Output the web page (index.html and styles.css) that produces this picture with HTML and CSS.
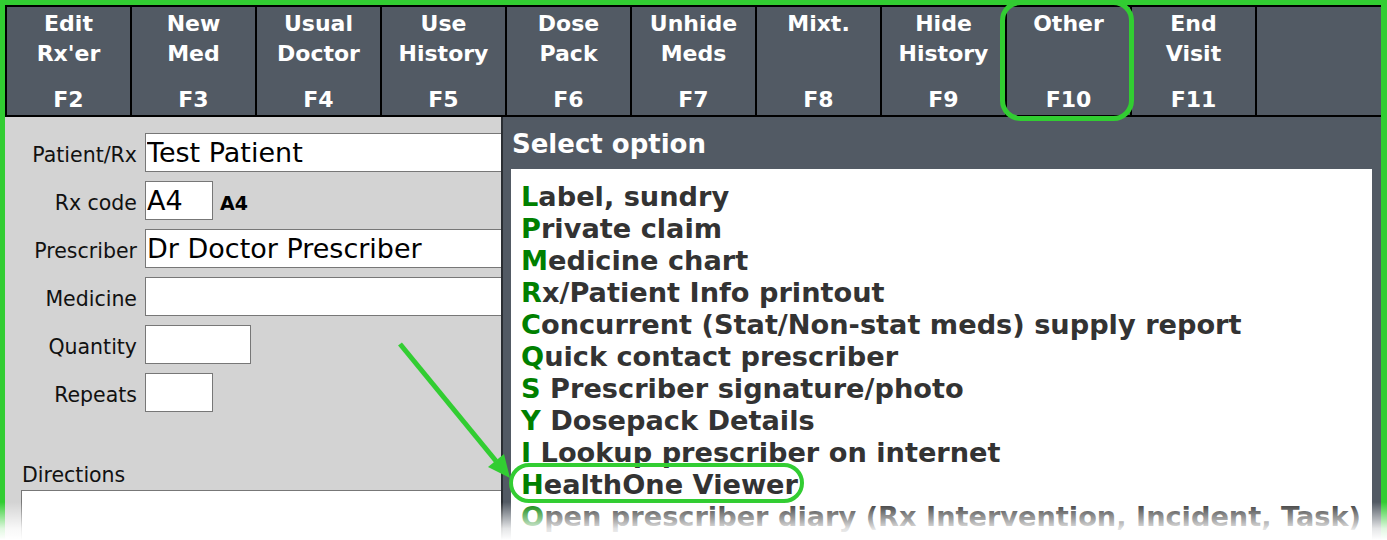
FILE: index.html
```html
<!DOCTYPE html>
<html lang="en">
<head>
    <meta charset="UTF-8">
    <title>Dispense - Other options</title>
    <link rel="stylesheet" href="styles.css">
</head>
<body>

    <div class="frame">
        <div class="toolbar">
            <div class="fkey"><span>Edit<br>Rx'er</span><span>F2</span></div>
            <div class="fkey"><span>New<br>Med</span><span>F3</span></div>
            <div class="fkey"><span>Usual<br>Doctor</span><span>F4</span></div>
            <div class="fkey"><span>Use<br>History</span><span>F5</span></div>
            <div class="fkey"><span>Dose<br>Pack</span><span>F6</span></div>
            <div class="fkey"><span>Unhide<br>Meds</span><span>F7</span></div>
            <div class="fkey"><span>Mixt.</span><span>F8</span></div>
            <div class="fkey"><span>Hide<br>History</span><span>F9</span></div>
            <div class="fkey"><span>Other</span><span>F10</span></div>
            <div class="fkey"><span>End<br>Visit</span><span>F11</span></div>
            <div class="fkey fkey-empty"></div>
        </div>

        <div class="main">
            <div class="form-panel">
                <div class="form-grid">
                    <label>Patient/Rx</label>
                    <input class="wide" value="Test Patient">

                    <label>Rx code</label>
                    <div class="rx-code">
                        <input class="short" value="A4">
                        <b>A4</b>
                    </div>

                    <label>Prescriber</label>
                    <input class="wide" value="Dr Doctor Prescriber">

                    <label>Medicine</label>
                    <input class="wide" value="">

                    <label>Quantity</label>
                    <input class="medium" value="">

                    <label>Repeats</label>
                    <input class="short" value="">
                </div>

                <div class="directions">
                    <label>Directions</label>
                    <textarea></textarea>
                </div>
            </div>

            <div class="options-panel">
                <div class="options-title">Select option</div>
                <ul class="options-list">
                    <li><span class="key">L</span>abel, sundry</li>
                    <li><span class="key">P</span>rivate claim</li>
                    <li><span class="key">M</span>edicine chart</li>
                    <li><span class="key">R</span>x/Patient Info printout</li>
                    <li><span class="key">C</span>oncurrent (Stat/Non-stat meds) supply report</li>
                    <li><span class="key">Q</span>uick contact prescriber</li>
                    <li><span class="key">S</span> Prescriber signature/photo</li>
                    <li><span class="key">Y</span> Dosepack Details</li>
                    <li><span class="key">I</span> Lookup prescriber on internet</li>
                    <li><span class="key">H</span>ealthOne Viewer</li>
                    <li><span class="key">O</span>pen prescriber diary (Rx Intervention, Incident, Task)</li>
                </ul>
            </div>
        </div>
    </div>

    <!-- green callouts drawn over the screen -->
    <svg class="annotations" width="1387" height="540" viewBox="0 0 1387 540">
        <rect x="1002.5" y="2.5" width="129" height="116" rx="18" fill="none" stroke="#32cd32" stroke-width="5"/>
        <rect x="511" y="465" width="291" height="36" rx="18" fill="none" stroke="#32cd32" stroke-width="4"/>
        <line x1="400" y1="344" x2="496" y2="461" stroke="#32cd32" stroke-width="5"/>
        <polygon points="510,478 488,467 504,454" fill="#32cd32"/>
    </svg>

    <div class="bottom-fade"></div>

</body>
</html>
```

FILE: styles.css
```css
body {
    margin: 0;
    font-family: "DejaVu Sans", Verdana, sans-serif;
    background: white;
    width: 1387px;
    height: 540px;
    overflow: hidden;
    position: relative;
}

.frame {
    box-sizing: border-box;
    width: 1387px;
    height: 540px;
    border: 5px solid #32cd32;
    border-right-width: 6px;
    border-bottom: none;
    display: flex;
    flex-direction: column;
    overflow: hidden;
}

/* function key bar */
.toolbar {
    display: flex;
    height: 112px;
    box-sizing: border-box;
    background: #525a64;
    border-top: 2px solid #000;
    border-bottom: 2px solid #000;
    flex-shrink: 0;
}

.fkey {
    box-sizing: border-box;
    width: 125px;
    border-left: 2px solid #000;
    padding-top: 2px;
    display: flex;
    flex-direction: column;
    justify-content: space-between;
    color: white;
    font-weight: bold;
    font-size: 22px;
    line-height: 30px;
    text-align: center;
}

.fkey-empty {
    flex: 1;
}

.main {
    flex: 1;
    display: flex;
    min-height: 0;
}

/* left: prescription form */
.form-panel {
    width: 496px;
    flex-shrink: 0;
    background: #d3d3d3;
    overflow: hidden;
    padding-top: 16px;
}

.form-grid {
    display: grid;
    grid-template-columns: 132px 1fr;
    column-gap: 8px;
    row-gap: 9px;
    align-items: baseline;
}

.form-grid label {
    text-align: right;
    font-size: 20.5px;
    color: #111;
}

.form-grid input {
    box-sizing: border-box;
    height: 39px;
    border: 1px solid #777;
    background: white;
    font-family: "DejaVu Sans", Verdana, sans-serif;
    font-size: 27px;
    padding: 0 1px;
    color: #000;
}

.form-grid .wide {
    width: 420px;
}

.form-grid .medium {
    width: 106px;
}

.form-grid .short {
    width: 68px;
}

.rx-code {
    display: flex;
    align-items: baseline;
    gap: 7px;
}

.rx-code b {
    font-size: 19px;
}

.directions {
    margin-top: 51px;
    padding-left: 16px;
}

.directions label {
    display: block;
    font-size: 20.5px;
    color: #111;
    padding-left: 1px;
    margin-bottom: 3px;
}

.directions textarea {
    display: block;
    box-sizing: border-box;
    width: 500px;
    height: 120px;
    border: 1px solid #777;
    background: white;
    resize: none;
}

/* right: option popup */
.options-panel {
    flex: 1;
    background: #525a64;
    border-left: 2px solid #2a2e33;
    display: flex;
    flex-direction: column;
    min-width: 0;
}

.options-title {
    height: 52px;
    line-height: 54px;
    padding-left: 9px;
    color: white;
    font-weight: bold;
    font-size: 26px;
}

.options-list {
    flex: 1;
    list-style: none;
    margin: 0 9px 0 8px;
    padding: 12px 0 0 10px;
    background: white;
    overflow: hidden;
}

.options-list li {
    font-weight: bold;
    font-size: 27.2px;
    line-height: 32px;
    color: #333;
    white-space: nowrap;
}

.key {
    color: #008000;
}

.annotations {
    position: absolute;
    top: 0;
    left: 0;
    pointer-events: none;
}

.bottom-fade {
    position: absolute;
    left: 0;
    right: 0;
    bottom: 0;
    height: 38px;
    background: linear-gradient(to bottom, rgba(255, 255, 255, 0), rgba(255, 255, 255, 0.85) 70%, white);
    pointer-events: none;
}
```
